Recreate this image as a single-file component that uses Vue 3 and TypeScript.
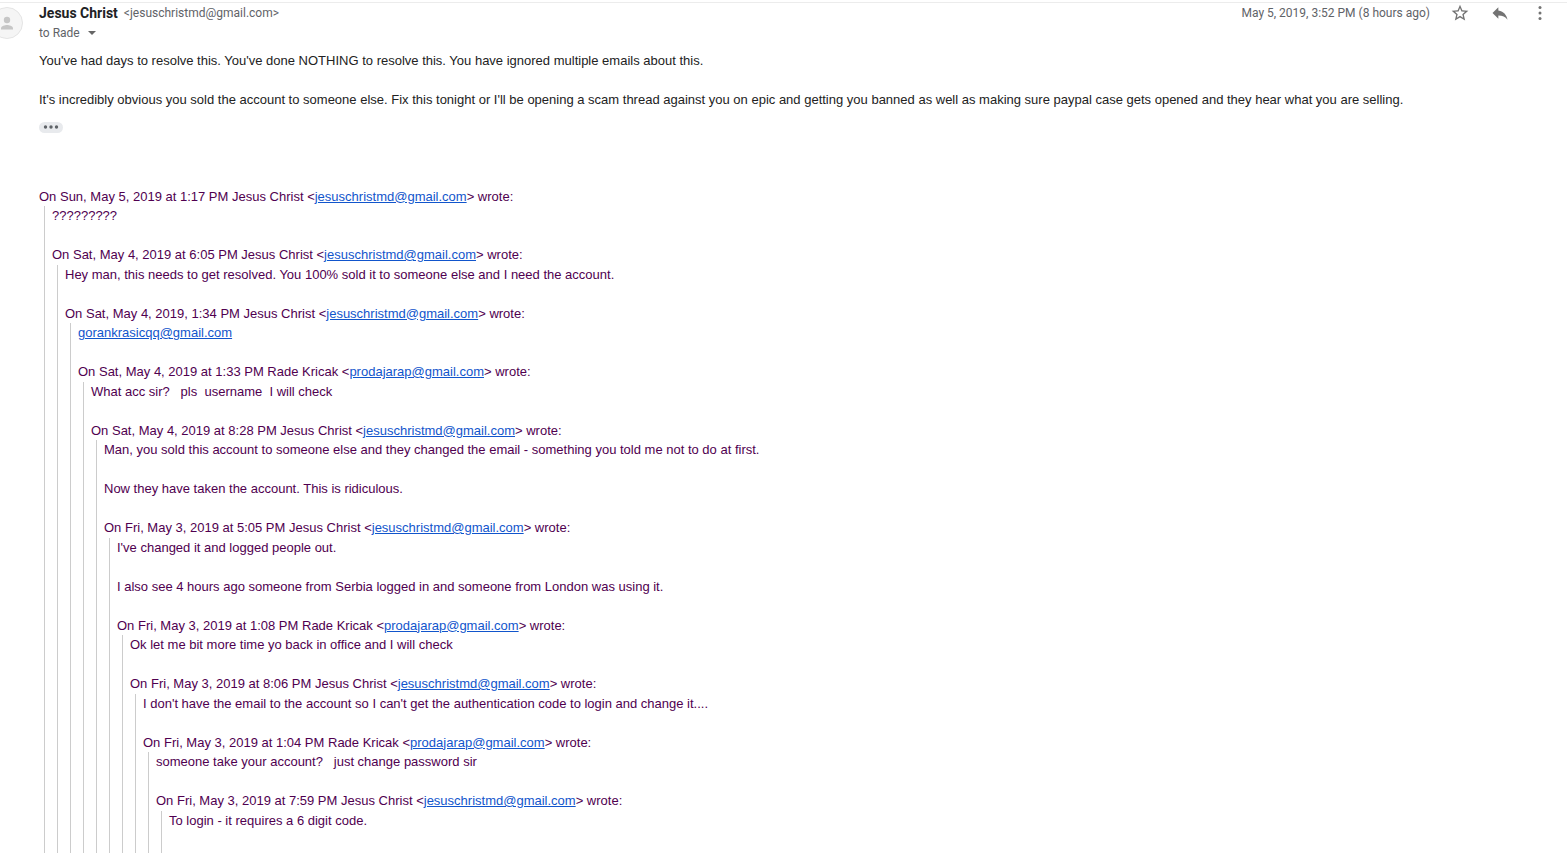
<script setup lang="ts">
import { h, type FunctionalComponent, type VNode } from 'vue'

interface Reply {
  date: string
  author: string
  email: string
  lines: string[]
  link?: boolean
}

const jesus = { author: 'Jesus Christ', email: 'jesuschristmd@gmail.com' }
const rade = { author: 'Rade Kricak', email: 'prodajarap@gmail.com' }

const replies: Reply[] = [
  { ...jesus, date: 'Sun, May 5, 2019 at 1:17 PM', lines: ['?????????'] },
  { ...jesus, date: 'Sat, May 4, 2019 at 6:05 PM', lines: ['Hey man, this needs to get resolved. You 100% sold it to someone else and I need the account.'] },
  { ...jesus, date: 'Sat, May 4, 2019, 1:34 PM', lines: ['gorankrasicqq@gmail.com'], link: true },
  { ...rade, date: 'Sat, May 4, 2019 at 1:33 PM', lines: ['What acc sir?\u00a0 \u00a0pls\u00a0 username\u00a0 I will check'] },
  { ...jesus, date: 'Sat, May 4, 2019 at 8:28 PM', lines: ['Man, you sold this account to someone else and they changed the email - something you told me not to do at first.', 'Now they have taken the account. This is ridiculous.'] },
  { ...jesus, date: 'Fri, May 3, 2019 at 5:05 PM', lines: ["I've changed it and logged people out.", 'I also see 4 hours ago someone from Serbia logged in and someone from London was using it.'] },
  { ...rade, date: 'Fri, May 3, 2019 at 1:08 PM', lines: ['Ok let me bit more time yo back in office and I will check'] },
  { ...jesus, date: 'Fri, May 3, 2019 at 8:06 PM', lines: ["I don't have the email to the account so I can't get the authentication code to login and change it...."] },
  { ...rade, date: 'Fri, May 3, 2019 at 1:04 PM', lines: ['someone take your account?\u00a0 \u00a0just change password sir'] },
  { ...jesus, date: 'Fri, May 3, 2019 at 7:59 PM', lines: ['To login - it requires a 6 digit code.'] },
]

const mailLink = (email: string): VNode => h('a', { href: `mailto:${email}` }, email)

// Each reply quotes the one before it, so the thread nests one level per entry.
const QuoteThread: FunctionalComponent<{ items: Reply[] }> = ({ items }) => {
  const [reply, ...rest] = items
  return h('div', { class: 'reply' }, [
    h('div', ['On ', reply.date, ' ', reply.author, ' <', mailLink(reply.email), '> wrote:']),
    h('blockquote', { class: 'quote' }, [
      ...reply.lines.map((line) => h('p', { class: 'line' }, reply.link ? [mailLink(line)] : line)),
      rest.length ? h(QuoteThread, { items: rest }) : null,
    ]),
  ])
}
QuoteThread.props = ['items']
</script>

<template>
  <main class="message">
    <div class="avatar">
      <svg viewBox="0 0 32 32" width="32" height="32" aria-hidden="true">
        <circle cx="16" cy="16" r="15.5" fill="#f5f5f5" stroke="#e4e4e4" />
        <circle cx="16" cy="13" r="3.2" fill="#c6c6c6" />
        <path d="M10 22.5v-1.300c0-2.200 4-3.300 6-3.300s6 1.100 6 3.300v1.300z" fill="#c6c6c6" />
      </svg>
    </div>
    <div class="content">
      <header class="header">
        <div class="sender">
          <h1 class="name">Jesus Christ</h1>
          <span class="address">&lt;jesuschristmd@gmail.com&gt;</span>
        </div>
        <div class="actions">
          <time class="date" datetime="2019-05-05T15:52">May 5, 2019, 3:52 PM (8 hours ago)</time>
          <button type="button" class="icon" aria-label="Star">
            <svg viewBox="0 0 24 24" width="20" height="20"><path d="M22 9.240l-7.190-.62L12 2 9.190 8.630 2 9.240l5.460 4.730L5.820 21 12 17.270 18.180 21l-1.630-7.030L22 9.240zM12 15.400l-3.760 2.270 1-4.280-3.320-2.880 4.380-.38L12 6.100l1.710 4.040 4.380.38-3.320 2.880 1 4.280L12 15.400z" /></svg>
          </button>
          <button type="button" class="icon" aria-label="Reply">
            <svg viewBox="0 0 24 24" width="20" height="20"><path d="M10 9V5l-7 7 7 7v-4.100c5 0 8.500 1.600 11 5.100-1-5-4-10-11-11z" /></svg>
          </button>
          <button type="button" class="icon" aria-label="More">
            <svg viewBox="0 0 20 20" width="20" height="20"><circle cx="10" cy="4.500" r="1.500" /><circle cx="10" cy="10" r="1.500" /><circle cx="10" cy="15.500" r="1.500" /></svg>
          </button>
        </div>
      </header>
      <button type="button" class="recipient">
        to Rade
        <svg viewBox="0 0 8 4" width="8" height="4" aria-hidden="true"><path d="M0 0h8L4 4z" /></svg>
      </button>
      <section class="body">
        <p class="line">You've had days to resolve this. You've done NOTHING to resolve this. You have ignored multiple emails about this.</p>
        <p>It's incredibly obvious you sold the account to someone else. Fix this tonight or I'll be opening a scam thread against you on epic and getting you banned as well as making sure paypal case gets opened and they hear what you are selling.</p>
        <button type="button" class="trimmed" aria-label="Hide expanded content">
          <svg viewBox="0 0 16 4" width="16" height="4"><circle cx="2.500" cy="2" r="1.700" /><circle cx="8" cy="2" r="1.700" /><circle cx="13.500" cy="2" r="1.700" /></svg>
        </button>
        <QuoteThread class="thread" :items="replies" />
      </section>
    </div>
  </main>
</template>

<style>
body {
  margin: 0;
  background: #fff;
}
</style>

<style scoped>
.message {
  display: flex;
  height: 100vh;
  overflow: hidden;
  box-sizing: border-box;
  padding-top: 2px;
  font-family: Roboto, sans-serif;
}

.message::before {
  content: '';
  position: absolute;
  inset: 2px 0 auto;
  height: 1px;
  background: #ececec;
}

.avatar {
  flex: none;
  width: 39px;
  padding-top: 5px;
}

.avatar svg {
  display: block;
  margin-left: -9px;
}

.content {
  flex: 1;
  min-width: 0;
}

.header {
  display: flex;
  align-items: center;
  justify-content: space-between;
  height: 22px;
}

.sender {
  display: flex;
  align-items: center;
  gap: 6px;
}

.name {
  margin: 0;
  font-size: 14px;
  line-height: 20px;
  font-weight: 700;
  color: #202124;
}

.address,
.date,
.recipient {
  font-size: 12px;
  line-height: 16px;
  color: #5f6368;
}

.actions {
  display: flex;
  align-items: center;
  gap: 20px;
  padding-right: 17px;
}

button {
  display: block;
  margin: 0;
  padding: 0;
  border: 0;
  background: none;
  font-family: inherit;
  cursor: pointer;
}

.icon svg {
  display: block;
  fill: #737373;
}

.recipient {
  display: flex;
  align-items: center;
  gap: 8px;
  padding-top: 1px;
}

.recipient svg {
  fill: #666;
}

.body {
  margin-top: 10px;
  font: 13px/1.5 'Liberation Sans', Arial, sans-serif;
  color: #222;
}

.body p {
  margin: 0;
}

.body .line,
.body :deep(.line) {
  margin: 0;
  padding-bottom: 1.5em;
}

.trimmed {
  display: flex;
  align-items: center;
  justify-content: center;
  width: 24px;
  height: 11px;
  margin-top: 12px;
  border-radius: 6px;
  background: #e8eaed;
}

.trimmed svg {
  fill: #5f6368;
}

.thread {
  margin-top: 54px;
  color: #500050;
}

.thread :deep(a) {
  color: #15c;
}

.thread :deep(.quote) {
  margin: 0 0 0 5px;
  padding-left: 7px;
  border-left: 1px solid #ccc;
}

.thread :deep(.line:last-child) {
  padding-bottom: 3em;
}
</style>
